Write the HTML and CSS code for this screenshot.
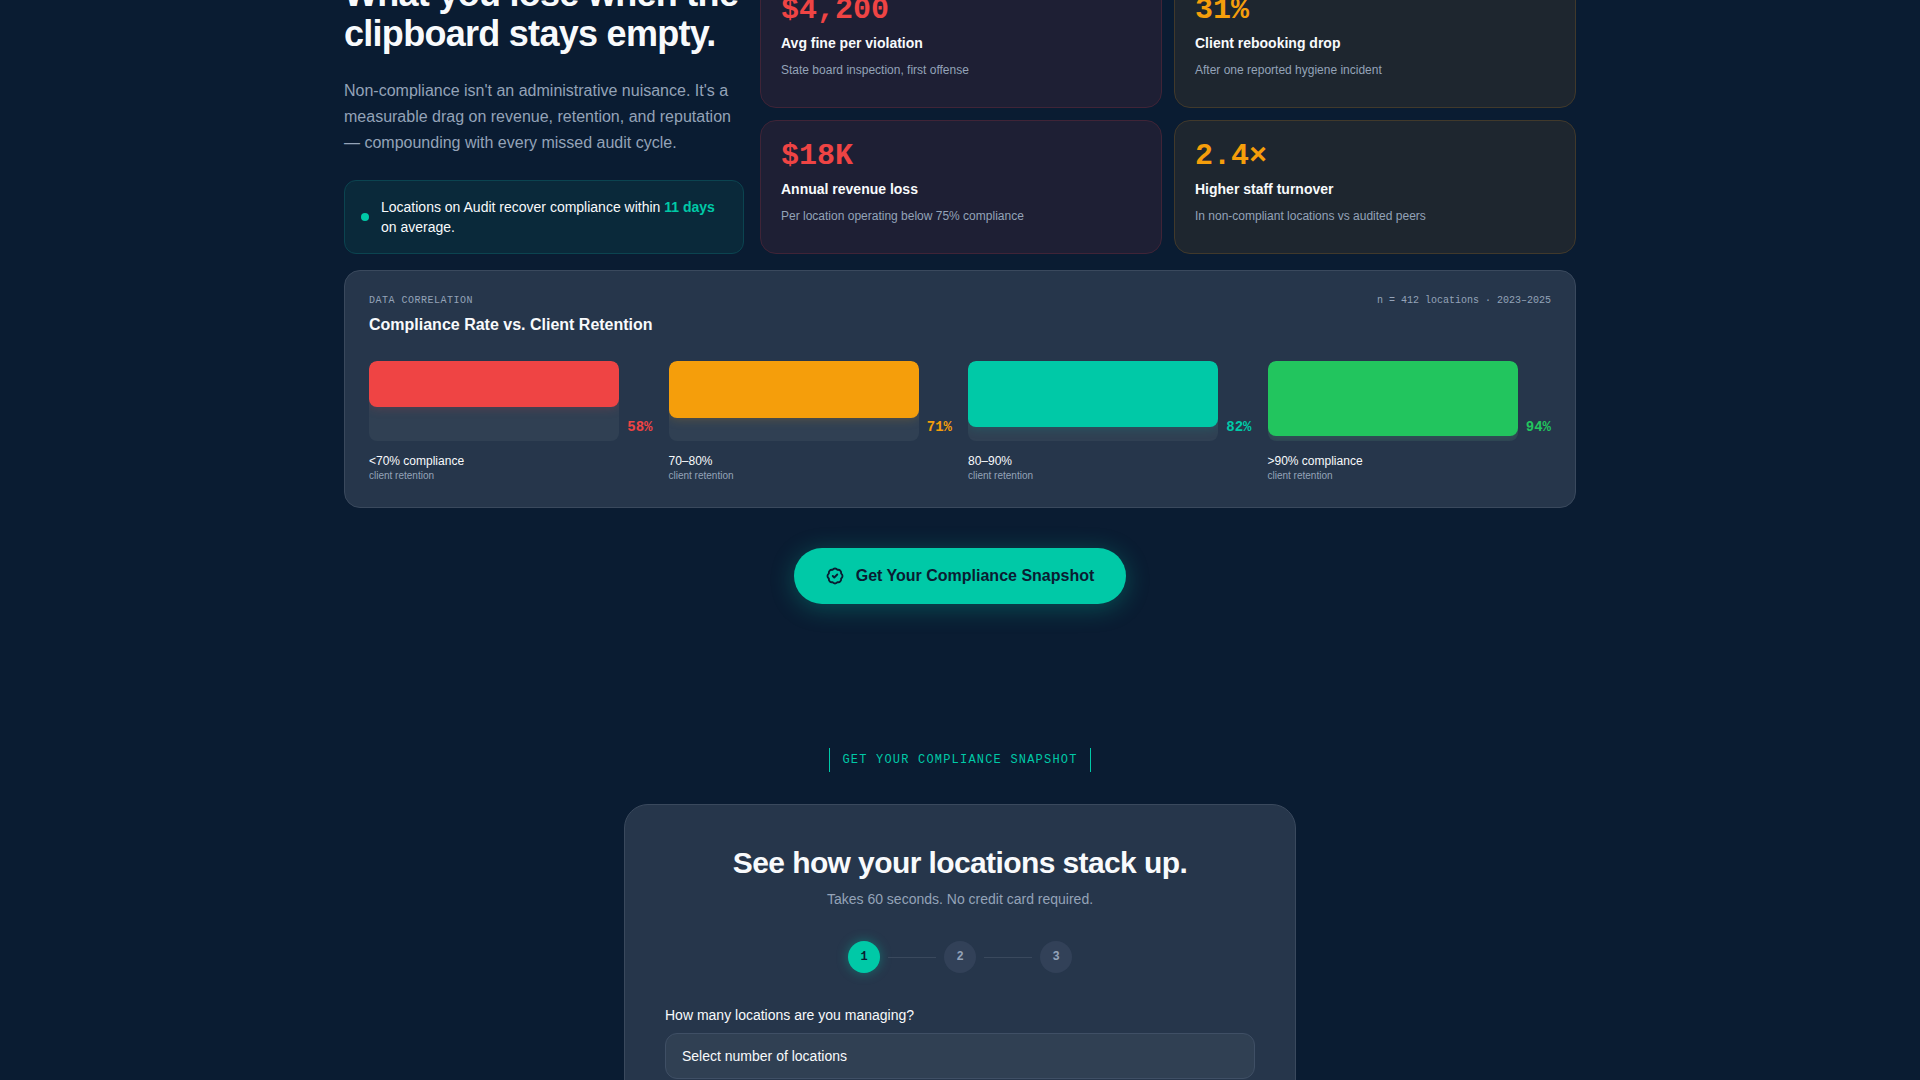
FILE: index.html
```html
<!DOCTYPE html>
<html lang="en">
<head>
<meta charset="utf-8">
<meta name="viewport" content="width=device-width, initial-scale=1">
<title>Audit – Compliance Snapshot</title>
<link rel="stylesheet" href="styles.css">
</head>
<body>
<main>
  <section class="cost">
    <div class="cost-top">
      <div class="intro">
        <h2>What you lose when the clipboard stays empty.</h2>
        <p class="lead">Non-compliance isn't an administrative nuisance. It's a measurable drag on revenue, retention, and reputation — compounding with every missed audit cycle.</p>
        <div class="callout">
          <span class="dot"></span>
          <p>Locations on Audit recover compliance within <strong>11 days</strong> on average.</p>
        </div>
      </div>
      <div class="stats">
        <article class="stat danger"><div class="value">$4,200</div><h3>Avg fine per violation</h3><p>State board inspection, first offense</p></article>
        <article class="stat warning"><div class="value">31%</div><h3>Client rebooking drop</h3><p>After one reported hygiene incident</p></article>
        <article class="stat danger"><div class="value">$18K</div><h3>Annual revenue loss</h3><p>Per location operating below 75% compliance</p></article>
        <article class="stat warning"><div class="value">2.4×</div><h3>Higher staff turnover</h3><p>In non-compliant locations vs audited peers</p></article>
      </div>
    </div>

    <article class="chart">
      <header class="chart-head">
        <div>
          <p class="eyebrow">DATA CORRELATION</p>
          <h3>Compliance Rate vs. Client Retention</h3>
        </div>
        <p class="sample">n = 412 locations · 2023–2025</p>
      </header>
      <div class="bars">
        <div class="bar red">
          <div class="bar-row"><div class="track"><div class="fill" style="height:58%"></div></div><span class="pct">58%</span></div>
          <p class="range">&lt;70% compliance</p><p class="note">client retention</p>
        </div>
        <div class="bar amber">
          <div class="bar-row"><div class="track"><div class="fill" style="height:71%"></div></div><span class="pct">71%</span></div>
          <p class="range">70–80%</p><p class="note">client retention</p>
        </div>
        <div class="bar teal">
          <div class="bar-row"><div class="track"><div class="fill" style="height:82%"></div></div><span class="pct">82%</span></div>
          <p class="range">80–90%</p><p class="note">client retention</p>
        </div>
        <div class="bar green">
          <div class="bar-row"><div class="track"><div class="fill" style="height:94%"></div></div><span class="pct">94%</span></div>
          <p class="range">&gt;90% compliance</p><p class="note">client retention</p>
        </div>
      </div>
    </article>

    <div class="cta-row">
      <button type="button" class="cta">
        <svg width="18" height="18" viewBox="0 0 24 24" fill="none" stroke="currentColor" stroke-width="2.5" stroke-linecap="round" stroke-linejoin="round" aria-hidden="true"><path d="M3.85 8.62a4 4 0 0 1 4.78-4.77 4 4 0 0 1 6.74 0 4 4 0 0 1 4.78 4.78 4 4 0 0 1 0 6.74 4 4 0 0 1-4.77 4.78 4 4 0 0 1-6.75 0 4 4 0 0 1-4.78-4.77 4 4 0 0 1 0-6.76Z"/><path d="m9 12 2 2 4-4"/></svg>
        Get Your Compliance Snapshot
      </button>
    </div>
  </section>

  <section class="snapshot">
    <p class="tag">GET YOUR COMPLIANCE SNAPSHOT</p>
    <form class="panel">
      <h2>See how your locations stack up.</h2>
      <p class="sub">Takes 60 seconds. No credit card required.</p>
      <div class="steps">
        <span class="step active">1</span><span class="link"></span>
        <span class="step">2</span><span class="link"></span>
        <span class="step">3</span>
      </div>
      <label for="locations">How many locations are you managing?</label>
      <select id="locations">
        <option>Select number of locations</option>
      </select>
    </form>
  </section>
</main>
</body>
</html>
```
FILE: styles.css
```css
:root {
  --bg: #0a1c32;
  --card: #26364b;
  --line: #3a495d;
  --text: #f8fafc;
  --muted: #94a3b8;
  --teal: #00c9a7;
  --red: #ef4444;
  --amber: #f59e0b;
  --green: #22c55e;
  --sans: "Liberation Sans", Arial, sans-serif;
  --mono: "Liberation Mono", "Courier New", monospace;
}

* { box-sizing: border-box; margin: 0; }

html { overflow: hidden; }

body {
  background: var(--bg);
  color: var(--text);
  font-family: var(--sans);
  font-size: 14px;
  line-height: 20px;
}

/* The page opens scrolled a little way into the cost section */
main { margin-top: -26px; }

.cost {
  max-width: 1280px;
  margin: 0 auto;
  padding: 0 24px;
}

.cost-top {
  display: grid;
  grid-template-columns: 400px 1fr;
  gap: 16px;
}

.intro h2 {
  font-size: 36px;
  line-height: 40px;
  letter-spacing: -0.02em;
}

.lead {
  margin: 24px 0;
  font-size: 16px;
  line-height: 26px;
  color: var(--muted);
}

.callout {
  display: flex;
  align-items: center;
  gap: 12px;
  padding: 16px;
  background: #0a293a;
  border: 1px solid #0b4450;
  border-radius: 12px;
}

.callout strong { color: var(--teal); }

.dot {
  flex: none;
  width: 8px;
  height: 8px;
  border-radius: 50%;
  background: var(--teal);
}

.stats {
  display: grid;
  grid-template-columns: 1fr 1fr;
  grid-auto-rows: 1fr;
  gap: 12px;
}

.stat {
  padding: 20px;
  border: 1px solid;
  border-radius: 16px;
}

.stat.danger { background: #1e1f34; border-color: #402437; }
.stat.warning { background: #1e262f; border-color: #41392b; }
.danger .value { color: var(--red); }
.warning .value { color: var(--amber); }

.value {
  font: bold 30px/30px var(--mono);
  margin-bottom: 8px;
}

.stat h3 {
  font-size: 14px;
  margin-bottom: 8px;
}

.stat p {
  font-size: 12px;
  line-height: 18px;
  color: var(--muted);
}

.chart {
  margin-top: 16px;
  padding: 24px;
  background: var(--card);
  border: 1px solid var(--line);
  border-radius: 16px;
}

.chart-head {
  display: flex;
  justify-content: space-between;
  margin-bottom: 24px;
}

.eyebrow,
.sample {
  font: 10px/12px var(--mono);
  color: var(--muted);
}

.eyebrow {
  letter-spacing: 0.05em;
  margin-bottom: 6px;
}

.chart h3 {
  font-size: 16px;
  line-height: 24px;
}

.bars {
  display: grid;
  grid-template-columns: repeat(4, 1fr);
  gap: 16px;
}

.red { --tone: var(--red); }
.amber { --tone: var(--amber); }
.teal { --tone: var(--teal); }
.green { --tone: var(--green); }

.bar-row {
  display: flex;
  align-items: flex-end;
  gap: 8px;
  margin-bottom: 12px;
}

.track {
  flex: 1;
  height: 80px;
  border-radius: 8px;
  background: #304053;
  overflow: hidden;
}

.fill {
  border-radius: 8px;
  background: var(--tone);
  box-shadow: 0 0 12px color-mix(in srgb, var(--tone) 25%, transparent);
}

.pct {
  padding-bottom: 4px;
  font: bold 14px/20px var(--mono);
  color: var(--tone);
}

.range {
  font-size: 12px;
  line-height: 16px;
}

.note {
  font-size: 10px;
  line-height: 14px;
  color: var(--muted);
}

.cta-row {
  display: flex;
  justify-content: center;
  margin-top: 40px;
}

.cta {
  display: flex;
  align-items: center;
  gap: 12px;
  padding: 16px 32px;
  border: 0;
  border-radius: 28px;
  background: var(--teal);
  color: #0a1c32;
  font: bold 16px/24px var(--sans);
  box-shadow: 0 4px 24px rgba(0, 201, 167, 0.3);
}

.snapshot {
  display: flex;
  flex-direction: column;
  align-items: center;
  padding: 144px 24px 80px;
}

.tag {
  padding: 4px 12px;
  border: solid var(--teal);
  border-width: 0 1px;
  color: var(--teal);
  font: 12px/16px var(--mono);
  letter-spacing: 0.1em;
  margin-bottom: 32px;
}

.panel {
  width: 100%;
  max-width: 672px;
  padding: 40px;
  background: var(--card);
  border: 1px solid var(--line);
  border-radius: 24px;
}

.panel h2 {
  font-size: 30px;
  line-height: 36px;
  letter-spacing: -0.02em;
  text-align: center;
}

.sub {
  margin: 8px 0 32px;
  text-align: center;
  color: var(--muted);
}

.steps {
  display: flex;
  justify-content: center;
  align-items: center;
  gap: 8px;
  margin-bottom: 32px;
}

.step {
  width: 32px;
  height: 32px;
  border-radius: 50%;
  background: #324158;
  color: var(--muted);
  font: bold 12px/32px var(--mono);
  text-align: center;
}

.step.active {
  background: var(--teal);
  color: #0a1c32;
  box-shadow: 0 0 12px rgba(0, 201, 167, 0.4);
}

.link {
  width: 48px;
  height: 1px;
  background: #3a495d;
}

.panel label {
  display: block;
  margin-bottom: 8px;
}

.panel select {
  appearance: none;
  display: block;
  width: 100%;
  padding: 12px 16px;
  border: 1px solid #3f4f65;
  border-radius: 12px;
  background: #304053;
  color: var(--text);
  font: 14px/20px var(--sans);
}
```
